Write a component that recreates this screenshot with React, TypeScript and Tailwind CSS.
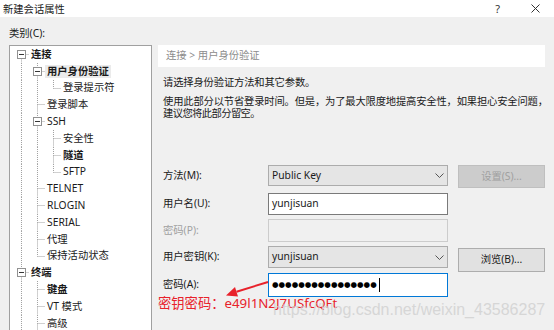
import React from 'react';

type TreeItem = {
  label: string;
  level: number;
  last?: boolean;
  open?: boolean;
  bold?: boolean;
  selected?: boolean;
  root?: boolean;
};

const tree: TreeItem[] = [
  { label: '连接', level: 0, open: true, bold: true, root: true },
  { label: '用户身份验证', level: 1, open: true, bold: true, selected: true },
  { label: '登录提示符', level: 2, last: true },
  { label: '登录脚本', level: 1 },
  { label: 'SSH', level: 1, open: true },
  { label: '安全性', level: 2 },
  { label: '隧道', level: 2, bold: true },
  { label: 'SFTP', level: 2, last: true },
  { label: 'TELNET', level: 1 },
  { label: 'RLOGIN', level: 1 },
  { label: 'SERIAL', level: 1 },
  { label: '代理', level: 1 },
  { label: '保持活动状态', level: 1, last: true },
  { label: '终端', level: 0, open: true, bold: true },
  { label: '键盘', level: 1, bold: true },
  { label: 'VT 模式', level: 1 },
  { label: '高级', level: 1 },
];

const DOT = '#a0a0a0';

function Guide({ on }: { on: boolean }) {
  return (
    <svg width="16" height="16.8" viewBox="0 0 16 16.8" className="shrink-0">
      {on && <line x1="8.5" y1="0" x2="8.5" y2="16.8" stroke={DOT} strokeDasharray="1 1" />}
    </svg>
  );
}

function Connector({ item }: { item: TreeItem }) {
  return (
    <svg width="16" height="16.8" viewBox="0 0 16 16.8" className="shrink-0">
      {!item.root && <line x1="8.5" y1="0" x2="8.5" y2="8.5" stroke={DOT} strokeDasharray="1 1" />}
      {!item.last && <line x1="8.5" y1="8.5" x2="8.5" y2="16.8" stroke={DOT} strokeDasharray="1 1" />}
      <line x1="8.5" y1="8.5" x2="16" y2="8.5" stroke={DOT} strokeDasharray="1 1" />
      {item.open && (
        <>
          <rect x="4.5" y="4.5" width="8" height="8" fill="#fff" stroke="#919191" />
          <line x1="6" y1="8.5" x2="11" y2="8.5" stroke="#333" />
        </>
      )}
    </svg>
  );
}

function Tree() {
  const cont: boolean[] = [];
  const rows = tree.map((item, i) => {
    const guides = cont.slice(0, item.level);
    cont[item.level] = !item.last;
    cont.length = item.level + 1;
    return (
      <div key={i} className="flex h-[16.8px] items-center">
        {guides.map((g, k) => (
          <Guide key={k} on={g} />
        ))}
        <Connector item={item} />
        <span
          className={`px-[2px] leading-[13px] whitespace-nowrap ${item.bold ? 'font-bold' : ''} ${
            item.selected ? 'bg-[#ebebeb]' : ''
          }`}
        >
          {item.label}
        </span>
      </div>
    );
  });
  return <div className="pl-[3px]">{rows}</div>;
}

function Select({ value }: { value: string }) {
  return (
    <div className="flex h-full w-[180px] items-center justify-between border border-[#acacac] bg-[#e5e5e5] pl-[3px] pr-[3px]">
      <span>{value}</span>
      <svg width="9" height="5" viewBox="0 0 9 5">
        <polyline points="0.5,0.5 4.5,4.5 8.5,0.5" fill="none" stroke="#555" />
      </svg>
    </div>
  );
}

export default function App() {
  return (
    <div className="relative h-[330px] w-[554px] overflow-hidden bg-[#f0f0f0] font-['Noto_Sans','Noto_Sans_CJK_SC',sans-serif] text-[10.3px] text-[#1a1a1a]">
      {/* title bar */}
      <div className="flex h-[17px] items-center justify-between bg-white pl-[3px] pr-[14px]">
        <span className="leading-[12px]">新建会话属性</span>
        <div className="flex items-center gap-[31px]">
          <span className="text-[11px] leading-[12px] text-[#333]">?</span>
          <svg width="9" height="9" viewBox="0 0 9 9">
            <path d="M0.5 0.5 L8.5 8.5 M8.5 0.5 L0.5 8.5" stroke="#333" strokeWidth="1" />
          </svg>
        </div>
      </div>

      <div className="flex pl-[9px]">
        {/* left: categories */}
        <div className="w-[143px] shrink-0">
          <div className="h-[28px] pt-[10px] leading-[12px]">类别(C):</div>
          <div className="h-[300px] border border-[#a0a0a0] bg-white">
            <Tree />
          </div>
        </div>

        {/* right: page */}
        <div className="ml-[6px] w-[387px] shrink-0 pt-[28px]">
          <div className="flex h-[22px] items-center bg-white pl-[8px] text-[#8c8c8c]">连接 &gt; 用户身份验证</div>
          <div className="mt-[9px] pl-[5px] leading-[12px] tracking-[-0.15px]">请选择身份验证方法和其它参数。</div>
          <div className="mt-[7px] whitespace-nowrap pl-[5px] leading-[12px]">
            <div className="tracking-[-0.17px]">
              使用此部分以节省登录时间。但是，为了最大限度地提高安全性，如果担心安全问题，
            </div>
            <div className="tracking-[-0.6px]">建议您将此部分留空。</div>
          </div>

          <div className="mt-[46px] flex h-[23px] items-start">
            <div className="flex h-[21px] w-[110px] items-center pl-[5px]">方法(M):</div>
            <div className="h-[21px]">
              <Select value="Public Key" />
            </div>
            <div className="ml-[10px] flex h-[23px] w-[87px] items-center justify-center border border-[#bfbfbf] bg-[#cccccc] text-[#a0a0a0]">
              设置(S)...
            </div>
          </div>

          <div className="mt-[5px] flex h-[22px] items-center">
            <div className="w-[110px] pl-[5px]">用户名(U):</div>
            <div className="flex h-full w-[180px] items-center border border-[#7a7a7a] bg-white pl-[3px]">yunjisuan</div>
          </div>

          <div className="mt-[4px] flex h-[23px] items-center">
            <div className="w-[110px] pl-[5px] text-[#a0a0a0]">密码(P):</div>
            <div className="h-full w-[180px] border border-[#cccccc] bg-[#f0f0f0]" />
          </div>

          <div className="mt-[4px] flex h-[26px] items-start">
            <div className="flex h-[22px] w-[110px] items-center pl-[5px]">用户密钥(K):</div>
            <div className="h-[22px]">
              <Select value="yunjisuan" />
            </div>
            <div className="ml-[10px] mt-[2px] flex h-[24px] w-[87px] items-center justify-center border border-[#adadad] bg-[#e1e1e1]">
              浏览(B)...
            </div>
          </div>

          <div className="mt-[1px] flex h-[24px] items-center">
            <div className="w-[110px] pl-[5px]">密码(A):</div>
            <div className="flex h-full w-[180px] items-center border border-[#0078d7] bg-white pl-[3px]">
              <span className="font-['DejaVu_Sans'] text-[7.5px] leading-[10px] tracking-[0px] text-black">
                ●●●●●●●●●●●●●●●●
              </span>
              <span className="ml-[2px] h-[14px] w-px bg-black" />
            </div>
          </div>

          <div className="text-[13.3px] leading-[13px] text-[#e8222b]">密钥密码：e49l1N2J7USfcQFt</div>
        </div>
      </div>

      {/* watermark */}
      <div className="pointer-events-none absolute left-[273px] top-[301px] font-['Liberation_Sans',sans-serif] text-[16px] leading-[18px] text-[#cfcfcf]/80">
        https://blog.csdn.net/weixin_43586287
      </div>

      {/* annotation arrow */}
      <svg className="pointer-events-none absolute left-[220px] top-[275px]" width="55" height="26" viewBox="0 0 55 26">
        <line x1="48" y1="7" x2="16.5" y2="16.7" stroke="#e8222b" strokeWidth="2" />
        <polygon points="6,20.5 18,21.5 15,11.9" fill="#e8222b" />
      </svg>
    </div>
  );
}
